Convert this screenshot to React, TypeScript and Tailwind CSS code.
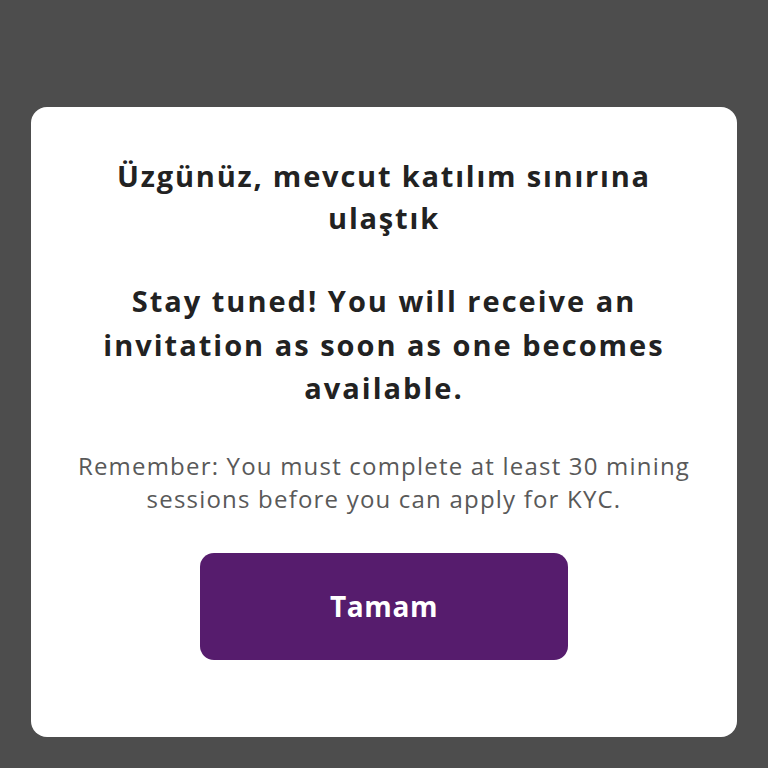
export default function App() {
  return (
    <div className="w-[768px] h-[768px] bg-[#4d4d4d] flex flex-col pt-[107px] pl-[31px] font-['Open_Sans','Noto_Sans',sans-serif]">
      <div className="w-[706px] h-[630px] bg-white rounded-[16px] px-[20px] pt-[48px] flex flex-col items-center text-center">
        <h1 className="text-[29px] leading-[42px] font-bold tracking-[1.8px] text-[#222222] whitespace-nowrap">
          Üzgünüz, mevcut katılım sınırına
          <br />
          ulaştık
        </h1>
        <h2 className="mt-[40px] text-[29px] leading-[43.5px] font-bold tracking-[2px] text-[#222222] whitespace-nowrap">
          Stay tuned! You will receive an
          <br />
          invitation as soon as one becomes
          <br />
          available.
        </h2>
        <p className="mt-[39px] text-[24px] leading-[33px] tracking-[1.2px] text-[#595959] whitespace-nowrap">
          Remember: You must complete at least 30 mining
          <br />
          sessions before you can apply for KYC.
        </p>
        <button className="mt-[38px] w-[368px] h-[107px] rounded-[14px] bg-[#561c6d] text-white text-[28px] font-bold tracking-[0.6px]">
          Tamam
        </button>
      </div>
    </div>
  );
}
